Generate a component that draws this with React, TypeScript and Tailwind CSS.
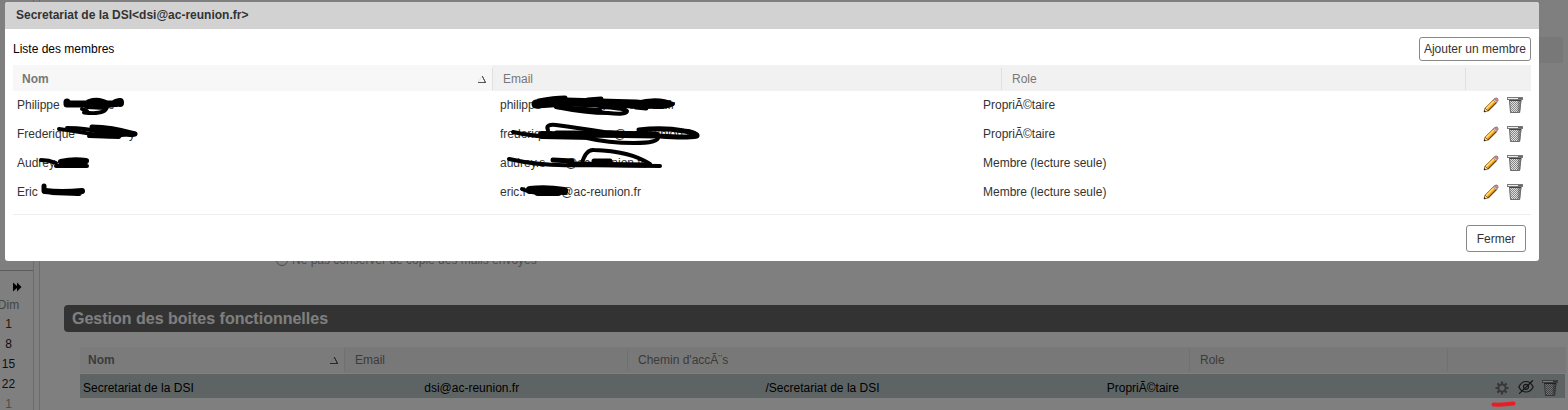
import { useId } from 'react';

type Stroke = { d: string; w: number };

type Member = {
  name: string;
  nameGap: string;
  nameEnd: string;
  nameMarks: Stroke[];
  email: string;
  emailGap: string;
  emailMarks: Stroke[];
  role: string;
};

const members: Member[] = [
  {
    name: 'Philippe',
    nameGap: 'w-[48px]',
    nameEnd: 'e',
    nameMarks: [
      { d: 'M54 11 V13 L76 13 L99 13', w: 7 },
      { d: 'M76 11 Q86 8 94 13 L92 16 L74 15', w: 6 },
      { d: 'M103 12 L107 11 V12', w: 8 },
      { d: 'M69 18 L74 20 M71 21.5 Q92 24 94 16', w: 4 },
    ],
    email: 'philippe',
    emailGap: 'w-[54px]',
    emailMarks: [
      { d: 'M40 13 L70 11 L104 12 L140 13 L150 14', w: 9 },
      { d: 'M43 10 Q58 7 69 7 M92 9 L105 8 M140 16 L150 17', w: 5 },
      { d: 'M60 16 Q90 22 112 22 Q131 24 131 20 Q127 17 104 16', w: 4 },
      { d: 'M60 16 L104 19', w: 4 },
      { d: 'M140 12 Q162 6 177 13 Q168 18 148 15 L164 14', w: 4 },
      { d: 'M146 12 L172 12', w: 5 },
    ],
    role: 'PropriÃ©taire',
  },
  {
    name: 'Frederique',
    nameGap: 'w-[54px]',
    nameEnd: 'y',
    nameMarks: [
      { d: 'M46 9 Q62 11 84 15 Q98 18 114 14', w: 4 },
      { d: 'M54 8 Q74 8 91 13 L106 17 L76 16', w: 4 },
      { d: 'M79 7 Q98 7 122 14 Q112 16 96 10', w: 5 },
      { d: 'M80 10 L108 14', w: 5 },
    ],
    email: 'frederique',
    emailGap: 'w-[60px]',
    emailMarks: [
      { d: 'M17 12 Q44 18 70 16 L146 15', w: 4 },
      { d: 'M46 15 L96 16', w: 8 },
      { d: 'M96 14 L160 15', w: 7 },
      { d: 'M52 10 Q49 4 60 5 Q82 8 108 12 L150 14', w: 4 },
      { d: 'M60 12 L110 12', w: 3 },
      { d: 'M91 18 Q112 23 138 23 Q163 23 162 17', w: 4 },
      { d: 'M143 10 Q167 7 188 11 Q202 13 201 16 Q190 18 164 16 L142 13', w: 5 },
    ],
    role: 'PropriÃ©taire',
  },
  {
    name: 'Audrey',
    nameGap: 'w-[4px]',
    nameEnd: '',
    nameMarks: [
      { d: 'M28 11 Q36 11 43 14', w: 4 },
      { d: 'M48 13 Q60 10 73 12', w: 6 },
      { d: 'M43 17 L74 17', w: 4 },
      { d: 'M56 14 L72 15', w: 4 },
    ],
    email: 'audrey.s',
    emailGap: 'w-[20px]',
    emailMarks: [
      { d: 'M13 10 Q44 17 78 16 L164 17', w: 4 },
      { d: 'M57 11 L76 12 M98 12 L114 12', w: 5 },
      { d: 'M86 14 Q90 0 98 1 Q134 2 154 15', w: 4 },
      { d: 'M74 15 L150 16', w: 5 },
    ],
    role: 'Membre (lecture seule)',
  },
  {
    name: 'Eric',
    nameGap: 'w-[36px]',
    nameEnd: 'e',
    nameMarks: [
      { d: 'M31 8 L31 13', w: 5 },
      { d: 'M32 13 Q48 15 69 13 M38 14 L66 15', w: 6 },
    ],
    email: 'eric.l',
    emailGap: 'w-[36px]',
    emailMarks: [
      { d: 'M26 11 Q40 17 60 15 L70 14', w: 4 },
      { d: 'M34 12 Q50 10 68 13 M42 14 L62 14', w: 8 },
    ],
    role: 'Membre (lecture seule)',
  },
];

function Scribble({ marks }: { marks: Stroke[] }) {
  return (
    <svg className="absolute left-0 top-0 overflow-visible pointer-events-none" width="230" height="29" aria-hidden="true">
      {marks.map(mark => (
        <path key={mark.d} d={mark.d} strokeWidth={mark.w} stroke="#000" fill="none" strokeLinecap="round" strokeLinejoin="round" />
      ))}
    </svg>
  );
}

function SortIcon() {
  return (
    <svg width="8" height="9" viewBox="0 0 8 9" fill="none" aria-hidden="true">
      <path d="M0.5 7 L4 1" stroke="#e2e2e2" />
      <path d="M0 7.5 H8 M4.5 1 V2.5 H5.5 V4.5 H6.5 V6.5 H7.5 V8" stroke="#555" />
    </svg>
  );
}

function PencilIcon() {
  return (
    <svg width="16" height="16" viewBox="0 0 16 16" aria-hidden="true">
      <path d="M1 15 L2 11 L11 2 L14 5 L5 14 Z" fill="#f5a50f" />
      <path d="M3 12 L11 4" stroke="#ffe08a" strokeWidth="1.2" />
      <path d="M2 11 L11 2" stroke="#a87020" strokeWidth="0.8" />
      <path d="M5 14 L14 5" stroke="#6b4310" strokeWidth="1.1" />
      <path d="M1 15 L2 11 L5 14 Z" fill="#f3dcae" stroke="#6b4c20" strokeWidth="0.7" />
      <path d="M1 15 V13 L3 15 Z" fill="#222" />
      <path d="M10 3 L11.5 1.5 L14.5 4.5 L13 6 Z" fill="#c9ccd2" stroke="#777" strokeWidth="0.6" />
      <path d="M11.5 2 L12.5 1 H14 L15 2 V3.5 L14 4.5 Z" fill="#dc8b96" stroke="#8d5662" strokeWidth="0.7" />
    </svg>
  );
}

function TrashIcon() {
  const id = useId();
  return (
    <svg width="16" height="16" viewBox="0 0 16 16" aria-hidden="true">
      <defs>
        <pattern id={id} width="2" height="2" patternUnits="userSpaceOnUse">
          <rect width="2" height="2" fill="#e0e0e0" />
          <rect width="1" height="1" fill="#868686" />
          <rect x="1" y="1" width="1" height="1" fill="#868686" />
        </pattern>
      </defs>
      <path d="M2 3 H14.5 L13 16 H3.5 Z" fill={`url(#${id})`} />
      <path d="M11 3 H14.5 L13 16 H10.5 Z" fill="#444" opacity="0.4" />
      <path d="M2.5 3 L3.5 15.5 H12.5 L14 3" fill="none" stroke="#6e6e6e" />
      <path d="M2.5 3.5 H14" stroke="#444" />
      <rect x="0.5" y="0.5" width="15" height="2" fill="#eee" stroke="#7a7a7a" />
      <path d="M11 1.5 H15" stroke="#666" />
    </svg>
  );
}

function GearIcon() {
  return (
    <svg width="16" height="16" viewBox="0 0 16 16" fill="none" stroke="#707070" aria-hidden="true">
      <circle cx="8" cy="8" r="3.6" strokeWidth="2" />
      <path
        d="M8 1.5 V4 M8 12 V14.5 M1.5 8 H4 M12 8 H14.5 M3.4 3.4 L5.2 5.2 M10.8 10.8 L12.6 12.6 M12.6 3.4 L10.8 5.2 M5.2 10.8 L3.4 12.6"
        strokeWidth="2.2"
      />
    </svg>
  );
}

function EyeOffIcon() {
  return (
    <svg width="16" height="16" viewBox="0 0 16 16" fill="none" stroke="#2c2c2c" strokeLinecap="round" aria-hidden="true">
      <path d="M0.8 7 Q3.5 1.5 8 1.5 Q12.5 1.5 15.2 7 Q12.5 12 8 12 Q3.5 12 0.8 7 Z" strokeWidth="1.2" />
      <circle cx="8" cy="6.8" r="2.5" strokeWidth="1.2" />
      <path d="M1.5 13.4 L14.5 0.8" strokeWidth="1.3" />
    </svg>
  );
}

const days = ['1', '8', '15', '22', '1'];

function MiniCalendar() {
  return (
    <aside className="w-[34px] shrink-0 overflow-hidden border-r border-[#d8d8d8] pt-[270px]">
      <div className="border-t border-[#b8b8b8] pt-[7px]">
        <button type="button" aria-label="Mois suivant" className="ml-3 block h-[18px]">
          <svg width="10" height="10" viewBox="0 0 10 10" fill="#000" aria-hidden="true">
            <path d="M1 0.5 L5 4 V0.5 L9.5 5 L5 9.5 V6 L1 9.5 Z" />
          </svg>
        </button>
        <table className="-ml-1 w-[25px] text-center leading-5">
          <thead>
            <tr className="h-[18px] leading-[18px] text-[#888]">
              <th className="p-0 font-normal">Dim</th>
            </tr>
          </thead>
          <tbody>
            {days.map((day, i) => (
              <tr key={i} className={i === 4 ? 'text-[#999]' : i === 0 ? 'text-[#5a2c10]' : 'text-[#222]'}>
                <td className="p-0">{day}</td>
              </tr>
            ))}
          </tbody>
        </table>
      </div>
    </aside>
  );
}

function MailboxPage() {
  return (
    <main className="ml-[5px] min-w-0 flex-1 border-l border-[#d8d8d8] pt-[37px]">
      <div className="mr-[5px] h-[26px] bg-[#f1f1f1]" />
      <div className="mt-[187px] flex h-5 items-center pl-[236px]">
        <input id="no-copy" type="radio" name="copy" className="size-3 appearance-none rounded-full border border-[#999] bg-white" />
        <label htmlFor="no-copy" className="pl-1 text-[#999]">Ne pas conserver de copie des mails envoyés</label>
      </div>

      <h2 className="ml-6 mt-[35px] h-[27px] rounded-l bg-[#666] px-2 text-base font-bold leading-[27px] text-white">
        Gestion des boites fonctionnelles
      </h2>

      <table className="ml-10 mr-[2px] mt-[15px] block">
        <thead className="block">
          <tr className="grid h-[26px] grid-cols-[264fr_283fr_562fr_258fr_119fr] bg-[#f1f1f1] text-left leading-[22px] text-[#777]">
            <th aria-sort="ascending" className="flex items-center justify-between bg-[#f7f7f7] pl-2 pr-[6px] font-bold">
              Nom
              <SortIcon />
            </th>
            <th className="my-[2px] border-l border-[#e0e0e0] pl-[10px] font-normal">Email</th>
            <th className="my-[2px] border-l border-[#e0e0e0] pl-[10px] font-normal">Chemin d'accÃ¨s</th>
            <th className="my-[2px] border-l border-[#e0e0e0] pl-[10px] font-normal">Role</th>
            <th aria-label="Actions" className="my-[2px] border-l border-[#e0e0e0]" />
          </tr>
        </thead>
        <tbody className="mr-px mt-px block">
          <tr className="grid h-6 grid-cols-[1fr_1fr_1fr_1fr_120px] grid-rows-[24px] bg-[#bcc8c8] leading-[28px] text-black">
            <td className="px-[3px]">Secretariat de la DSI</td>
            <td className="px-[3px]">dsi@ac-reunion.fr</td>
            <td className="px-[3px]">/Secretariat de la DSI</td>
            <td className="px-[3px]">PropriÃ©taire</td>
            <td className="relative flex items-end justify-end gap-2 pb-[2px] pr-[7px]">
              <button type="button" aria-label="Gérer les membres"><GearIcon /></button>
              <button type="button" aria-label="Masquer"><EyeOffIcon /></button>
              <button type="button" aria-label="Supprimer"><TrashIcon /></button>
              <svg className="absolute right-[49px] top-[27px] z-20" width="25" height="6" aria-hidden="true">
                <path d="M2.5 3.5 Q12 4 22.5 2.5" stroke="#ed1c24" strokeWidth="4" strokeLinecap="round" fill="none" />
              </svg>
            </td>
          </tr>
        </tbody>
      </table>
    </main>
  );
}

function MembersDialog() {
  return (
    <div
      role="dialog"
      aria-labelledby="dialog-title"
      className="absolute left-[5px] right-[29px] top-[2px] z-30 overflow-hidden rounded-[3px] bg-white text-[#333]"
    >
      <h1 id="dialog-title" className="h-[27px] bg-[#d2d2d2] px-[11px] font-bold leading-[27px]">
        Secretariat de la DSI&lt;dsi@ac-reunion.fr&gt;
      </h1>

      <div className="px-2 pt-2">
        <div className="mb-1 flex h-6 items-center justify-between">
          <p className="text-black">Liste des membres</p>
          <button type="button" className="h-6 rounded-[3px] border border-[#888] px-1">Ajouter un membre</button>
        </div>

        <table className="block border-b border-[#eee] pb-[7px]">
          <thead className="block">
            <tr className="grid h-[26px] grid-cols-[479fr_509fr_464fr_66fr] bg-[#f1f1f1] text-left leading-[22px] text-[#777]">
              <th aria-sort="ascending" className="flex items-center justify-between bg-[#f7f7f7] pl-[9px] pr-[6px] pt-[2px] font-bold">
                Nom
                <SortIcon />
              </th>
              <th className="mb-px mt-[3px] border-l border-[#e0e0e0] pl-[10px] font-normal">Email</th>
              <th className="mb-px mt-[3px] border-l border-[#e0e0e0] pl-[10px] font-normal">Role</th>
              <th aria-label="Actions" className="mb-px mt-[3px] border-l border-[#e0e0e0]" />
            </tr>
          </thead>
          <tbody className="block">
            {members.map(member => (
              <tr key={member.name} className="grid h-[29px] grid-cols-[1fr_1fr_1fr_69px] leading-[29px]">
                <td className="relative px-1">
                  {member.name}
                  <span className={`inline-block ${member.nameGap}`} />
                  {member.nameEnd}
                  <Scribble marks={member.nameMarks} />
                </td>
                <td className="relative px-1">
                  {member.email}
                  <span className={`inline-block ${member.emailGap}`} />
                  @ac-reunion.fr
                  <Scribble marks={member.emailMarks} />
                </td>
                <td className="px-1">{member.role}</td>
                <td className="flex items-start justify-end gap-2 pr-2 pt-[6px]">
                  <button type="button" aria-label="Modifier"><PencilIcon /></button>
                  <button type="button" aria-label="Supprimer"><TrashIcon /></button>
                </td>
              </tr>
            ))}
          </tbody>
        </table>

        <div className="flex justify-end pb-[9px] pr-[5px] pt-[10px]">
          <button type="button" className="h-[27px] w-[60px] rounded-[3px] border border-[#888]">Fermer</button>
        </div>
      </div>
    </div>
  );
}

export default function App() {
  return (
    <div className="relative flex h-screen overflow-hidden bg-white font-['Liberation_Sans',Arial,sans-serif] text-xs [&_svg]:block">
      <MiniCalendar />
      <MailboxPage />
      <div className="absolute inset-0 z-10 bg-black/50" />
      <MembersDialog />
    </div>
  );
}
